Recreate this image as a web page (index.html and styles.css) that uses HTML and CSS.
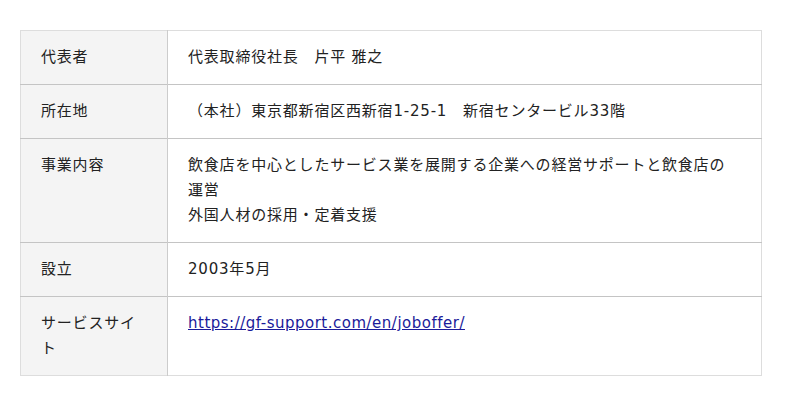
FILE: index.html
```html
<!DOCTYPE html>
<html lang="ja">
<head>
<meta charset="utf-8">
<title>会社概要</title>
<link rel="stylesheet" href="styles.css">
</head>
<body>
<table class="info">
  <tbody>
    <tr>
      <th>代表者</th>
      <td>代表取締役社長　片平 雅之</td>
    </tr>
    <tr>
      <th>所在地</th>
      <td>（本社）東京都新宿区西新宿1-25-1　新宿センタービル33階</td>
    </tr>
    <tr>
      <th>事業内容</th>
      <td><p class="line">飲食店を中心としたサービス業を展開する企業への経営サポートと飲食店の運営</p><p class="line">外国人材の採用・定着支援</p></td>
    </tr>
    <tr>
      <th>設立</th>
      <td>2003年5月</td>
    </tr>
    <tr>
      <th>サービスサイト</th>
      <td><a href="#">https://gf-support.com/en/joboffer/</a></td>
    </tr>
  </tbody>
</table>
</body>
</html>
```

FILE: styles.css
```css
html, body {
  margin: 0;
  padding: 0;
  background: #ffffff;
}
body {
  padding: 30px 0 0 20px;
  font-family: "DejaVu Sans", "Noto Sans CJK JP", sans-serif;
  font-size: 15px;
  letter-spacing: 0.8px;
  color: #222222;
}
.info {
  width: 742px;
  border-collapse: collapse;
  border: 1px solid #dddddd;
}
.info th,
.info td {
  padding: 14px 20px;
  line-height: 25px;
  text-align: left;
  vertical-align: top;
  font-weight: normal;
  border-top: 1px solid #c4c4c4;
}
.info tr:first-child th,
.info tr:first-child td {
  border-top: 1px solid #dddddd;
}
.info th {
  width: 106px;
  background: #f4f4f4;
  border-right: 1px solid #cccccc;
}
.line {
  margin: 0;
  max-width: 546px;
}
.info a {
  color: #1a1a9a;
  letter-spacing: 0.5px;
}
```
